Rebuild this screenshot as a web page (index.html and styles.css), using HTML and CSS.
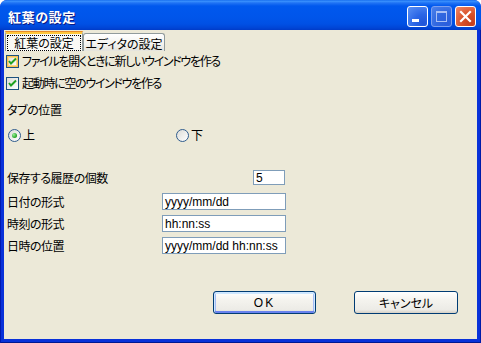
FILE: index.html
```html
<!DOCTYPE html>
<html lang="ja">
<head>
<meta charset="utf-8">
<title>紅葉の設定</title>
<link rel="stylesheet" href="styles.css">
</head>
<body>
<div class="window">
  <div class="titlebar">
    <span class="title">紅葉の設定</span>
    <div class="tbtns">
      <span class="tbtn tmin"><svg width="19" height="19" viewBox="0 0 19 19"><rect x="4" y="12" width="7" height="3" fill="#fff"/></svg></span>
      <span class="tbtn tmax"><svg width="19" height="19" viewBox="0 0 19 19"><rect x="4.5" y="4.5" width="10" height="10" fill="none" stroke="#A9C0F5" stroke-width="1"/><rect x="4" y="4" width="11" height="2" fill="#A9C0F5"/></svg></span>
      <span class="tbtn tclose"><svg width="19" height="19" viewBox="0 0 19 19"><path d="M5 5 L14 14 M14 5 L5 14" stroke="#fff" stroke-width="2.2" stroke-linecap="square"/></svg></span>
    </div>
  </div>
  <div class="frame">
    <div class="client">
      <div class="tabs">
        <div class="tab active"><span class="focus">紅葉の設定</span></div>
        <div class="tab">エディタの設定</div>
      </div>
      <div class="row check r-chk1">
        <span class="cb hover"><svg width="11" height="11" viewBox="0 0 11 11"><path d="M2 5 L4 7.5 L9 2.5" fill="none" stroke="#21A121" stroke-width="2"/></svg></span>
        <span class="ctext">ファイルを開くときに新しいウインドウを作る</span>
      </div>
      <div class="row check r-chk2">
        <span class="cb"><svg width="11" height="11" viewBox="0 0 11 11"><path d="M2 5 L4 7.5 L9 2.5" fill="none" stroke="#21A121" stroke-width="2"/></svg></span>
        <span class="ctext">起動時に空のウインドウを作る</span>
      </div>
      <div class="row label r-group">タブの位置</div>
      <div class="row radios">
        <div class="radio-item"><span class="rb on"></span><span>上</span></div>
        <div class="radio-item"><span class="rb"></span><span>下</span></div>
      </div>
      <div class="row field r-hist">
        <span class="flabel wide">保存する履歴の個数</span>
        <span class="input small">5</span>
      </div>
      <div class="row field r-date">
        <span class="flabel">日付の形式</span>
        <span class="input">yyyy/mm/dd</span>
      </div>
      <div class="row field r-next">
        <span class="flabel">時刻の形式</span>
        <span class="input">hh:nn:ss</span>
      </div>
      <div class="row field r-next">
        <span class="flabel">日時の位置</span>
        <span class="input">yyyy/mm/dd hh:nn:ss</span>
      </div>
      <div class="buttons">
        <span class="btn default">OK</span>
        <span class="btn">キャンセル</span>
      </div>
    </div>
  </div>
</div>
</body>
</html>
```

FILE: styles.css
```css
* { box-sizing: border-box; margin: 0; padding: 0; }
html, body { width: 481px; height: 343px; overflow: hidden; background: #ffffff; }
body {
  font-family: "Noto Sans CJK JP", "Noto Sans", sans-serif;
  font-size: 12px;
  color: #000;
  font-feature-settings: "palt";
  line-height: 1;
}
.window {
  width: 481px; height: 343px;
  display: flex; flex-direction: column;
  border-radius: 7px 7px 0 0;
  overflow: hidden;
  background: #0831D9;
}
.titlebar {
  height: 30px; flex: none;
  display: flex; align-items: center;
  padding: 3px 5px 0 8px;
  background: linear-gradient(#0A5FE8 0, #3D95FF 1px, #1F72F4 3px, #0058EE 6px, #0055EA 60%, #0050E4 80%, #0045D6 93%, #003BC8 100%);
}
.title {
  flex: 1;
  color: #fff;
  font-weight: bold;
  font-size: 13px;
  letter-spacing: 0.6px;
  text-shadow: 1px 1px 0 #0A1883;
}
.tbtns { display: flex; gap: 2px; }
.tbtn {
  width: 21px; height: 21px;
  border: 1px solid #fff;
  border-radius: 3px;
  display: flex; align-items: center; justify-content: center;
}
.tbtn svg { display: block; }
.tmin {
  background: radial-gradient(circle at 80% 85%, #1F55D8 0, #2B66E6 40%, #5A91F5 100%);
}
.tmax {
  border-color: #7C9FEF;
  background: radial-gradient(circle at 80% 85%, #2B5EDC 0, #3168E0 50%, #4D82EC 100%);
  margin-left: 1px;
}
.tclose {
  background: radial-gradient(circle at 80% 85%, #C23E1D 0, #D9522A 45%, #F08A6A 100%);
  margin-left: 1px;
}
.frame {
  flex: 1;
  display: flex;
  padding: 0 4px 4px 4px;
  background: #0831D9;
  box-shadow: inset 1px 0 0 #0019B0, inset -1px 0 0 #001CA8, inset 0 -1px 0 #001890;
}
.client {
  flex: 1;
  background: #ECE9D8;
  display: flex; flex-direction: column;
}
.tabs {
  display: flex; align-items: flex-end;
  margin-top: 1px;
  height: 20px;
  padding-left: 1px;
}
.tab {
  height: 18px;
  width: 82px;
  border: 1px solid #919B9C;
  border-bottom: none;
  border-radius: 3px 3px 0 0;
  background: linear-gradient(#FFFFFF, #F3F3EF 60%, #E4E3DC);
  display: flex; align-items: center; justify-content: center;
  padding-top: 2px;
  font-size: 12px;
}
.tab.active {
  width: 78px;
  height: 20px;
  border-top: 3px solid #FFC83C;
  box-shadow: inset 0 -1px 0 #FCFCFE;
  background: #FAF9F5;
  border-radius: 3px 3px 0 0;
  position: relative;
  padding-top: 0;
}
.tab.active::before {
  content: "";
  position: absolute; left: -1px; right: -1px; top: -3px;
  height: 1px;
  background: #E68B2C;
  border-radius: 3px 3px 0 0;
}
.focus {
  border: 1px dotted #000;
  width: 74px; height: 16px;
  display: flex; align-items: center; justify-content: center;
}
.row { display: flex; align-items: center; }
.check { height: 20px; padding-left: 2px; gap: 3px; }
.ctext { letter-spacing: -1.3px; }
.r-chk2 { margin-top: 2px; }
.cb {
  width: 13px; height: 13px;
  border: 1px solid #1C5180;
  background: linear-gradient(135deg, #DCDCD7, #FFFFFF);
  display: flex; align-items: center; justify-content: center;
  flex: none;
}
.cb.hover { box-shadow: inset 0 0 0 1px #F8C050, inset 0 0 0 2px #FBD88A; }
.label { height: 20px; margin-top: 7px; padding-left: 3px; letter-spacing: -0.4px; }
.radios { height: 20px; margin-top: 5px; padding-left: 4px; }
.radio-item { display: flex; align-items: center; gap: 2px; width: 168px; }
.rb {
  width: 13px; height: 13px;
  border-radius: 50%;
  border: 1px solid #2F5C8E;
  background: linear-gradient(135deg, #DCDCD7, #FFFFFF);
  display: flex; align-items: center; justify-content: center;
  flex: none;
}
.rb.on::after {
  content: "";
  width: 5px; height: 5px;
  border-radius: 50%;
  background: radial-gradient(circle at 35% 35%, #9AF09A, #21A121 70%);
}
.field { height: 17px; padding-left: 3px; }
.r-hist { margin-top: 24px; }
.r-date { margin-top: 7px; }
.r-next { margin-top: 5px; }
.flabel { width: 155px; flex: none; letter-spacing: -0.5px; }
.flabel.wide { width: 246px; }
.input {
  height: 17px;
  width: 124px;
  border: 1px solid #7F9DB9;
  background: #fff;
  font-family: "Liberation Sans", Arial, sans-serif;
  font-size: 12px;
  padding-left: 2px;
  display: flex; align-items: center;
}
.input.small { width: 32px; height: 15px; }
.buttons {
  display: flex; justify-content: flex-end; gap: 38px;
  margin-top: 37px;
  padding-right: 19px;
}
.btn {
  height: 23px;
  width: 104px;
  border: 1px solid #003C74;
  border-radius: 3px;
  background: linear-gradient(#FFFFFF, #F4F3EE 40%, #ECEBE6 85%, #D6D0C5);
  display: flex; align-items: center; justify-content: center;
  font-size: 12px;
}
.btn.default {
  width: 103px;
  box-shadow: inset 0 1px 0 1px #CEE7FF, inset 0 -1px 0 1px #6982EE, inset 1px 0 0 1px #A4BCF4, inset -1px 0 0 1px #A4BCF4;
  letter-spacing: 2px;
  font-family: "Liberation Sans", sans-serif;
}
```
